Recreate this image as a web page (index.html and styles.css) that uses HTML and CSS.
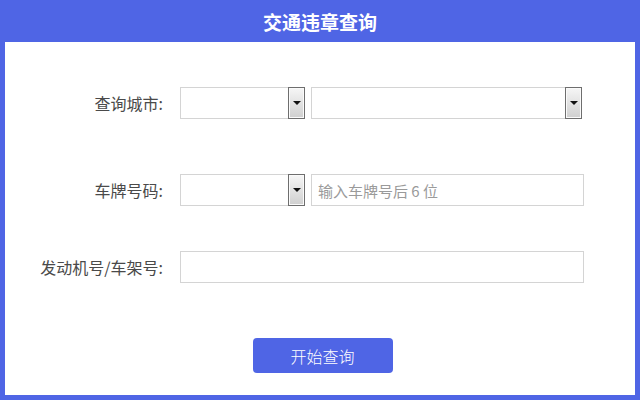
FILE: index.html
```html
<!DOCTYPE html>
<html lang="zh-CN">
<head>
    <meta charset="UTF-8">
    <meta name="viewport" content="width=device-width, initial-scale=1.0">
    <title>交通违章查询</title>
    <link rel="stylesheet" href="styles.css">
</head>
<body>
    <div class="frame">
        <header>
            <h1>交通违章查询</h1>
        </header>
        <main>
            <form class="query-form">
                <div class="row row-city">
                    <label>查询城市:</label>
                    <div class="controls">
                        <div class="select select-short"><span class="select-btn"></span></div>
                        <div class="select select-long"><span class="select-btn"></span></div>
                    </div>
                </div>
                <div class="row row-plate">
                    <label>车牌号码:</label>
                    <div class="controls">
                        <div class="select select-short"><span class="select-btn"></span></div>
                        <input type="text" class="text-input plate-input" placeholder="输入车牌号后 6 位">
                    </div>
                </div>
                <div class="row row-engine">
                    <label>发动机号/车架号:</label>
                    <div class="controls">
                        <input type="text" class="text-input engine-input">
                    </div>
                </div>
                <div class="actions">
                    <button type="button" class="btn">开始查询</button>
                </div>
            </form>
        </main>
    </div>
</body>
</html>
```
FILE: styles.css
```css
* {
    box-sizing: border-box;
}

body {
    margin: 0;
    font-family: "Noto Sans CJK SC", "Liberation Sans", sans-serif;
    background-color: #ffffff;
}

.frame {
    width: 640px;
    height: 400px;
    border: 5px solid #4f65e5;
    border-top: none;
    background-color: #ffffff;
}

header {
    background-color: #4f65e5;
    height: 42px;
    margin: 0 -5px;
    display: flex;
    align-items: center;
    justify-content: center;
}

header h1 {
    margin: 0;
    color: #ffffff;
    font-size: 19px;
    font-weight: bold;
    line-height: 1;
}

.query-form {
    padding-top: 45px;
}

.row {
    display: flex;
    align-items: center;
    height: 32px;
}

.row-city {
    margin-bottom: 55px;
}

.row-plate {
    margin-bottom: 45px;
}

.row-engine {
    margin-bottom: 55px;
}

.row label {
    width: 158px;
    text-align: right;
    font-size: 16px;
    color: #4a4a4a;
    margin-right: 17px;
}

.controls {
    display: flex;
    gap: 6px;
    height: 32px;
}

.select {
    display: flex;
    justify-content: flex-end;
    border: 1px solid #d4d4d4;
    height: 32px;
    background-color: #fff;
}

.select-short {
    width: 125px;
}

.select-long {
    width: 271px;
}

.select-btn {
    width: 17px;
    margin: -1px -1px -1px 0;
    border: 1px solid #6e6e6e;
    box-shadow: inset 0 0 0 1px #fafafa;
    background: linear-gradient(#f6f6f6, #cfcfcf);
    display: flex;
    align-items: center;
    justify-content: center;
}

.select-btn::after {
    content: "";
    border-left: 4px solid transparent;
    border-right: 4px solid transparent;
    border-top: 4px solid #111;
}

.text-input {
    height: 32px;
    border: 1px solid #d4d4d4;
    padding: 0 6px;
    font-family: inherit;
    font-size: 15px;
    color: #333;
    outline: none;
}

.text-input::placeholder {
    color: #9a9a9a;
}

.plate-input {
    width: 273px;
}

.engine-input {
    width: 404px;
}

.actions {
    display: flex;
    justify-content: center;
}

.btn {
    width: 140px;
    height: 35px;
    margin-left: 5px;
    border: none;
    border-radius: 4px;
    background-color: #4f65e5;
    color: #fff;
    font-family: inherit;
    font-size: 16px;
    font-weight: 300;
    cursor: pointer;
}
```
